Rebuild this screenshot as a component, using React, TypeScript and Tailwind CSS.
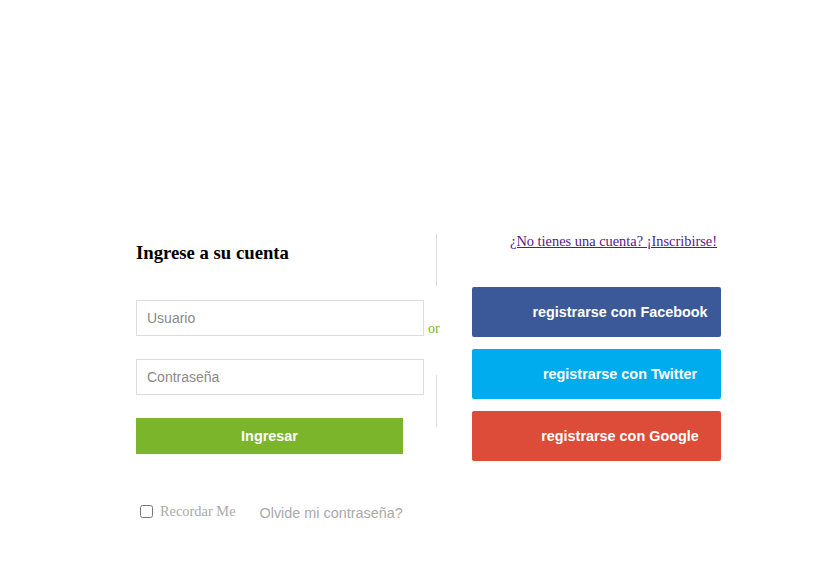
export default function App() {
  return (
    <div className="min-h-[586px] w-full bg-white pt-[234px]">
      <div className="ml-[136px] flex w-[585px]">
        {/* Login form */}
        <div className="w-[288px]">
          <h2 className="mt-[8px] font-['Liberation_Serif',serif] text-[18.72px] font-bold leading-[21px] text-black">
            Ingrese a su cuenta
          </h2>
          <input
            type="text"
            placeholder="Usuario"
            className="mt-[37px] block h-[36px] w-[288px] border border-[#dddddd] px-[10px] font-['Liberation_Sans',sans-serif] text-[14px] text-[#555] placeholder:text-[#8a8a8a] outline-none"
          />
          <input
            type="password"
            placeholder="Contraseña"
            className="mt-[23px] block h-[36px] w-[288px] border border-[#dddddd] px-[10px] font-['Liberation_Sans',sans-serif] text-[14px] text-[#555] placeholder:text-[#8a8a8a] outline-none"
          />
          <button className="mt-[23px] block h-[36px] w-[267px] bg-[#7ab52b] pt-[2px] font-['Liberation_Sans',sans-serif] text-[14.4px] font-bold text-white">
            Ingresar
          </button>
          <div className="mt-[45px] flex items-center">
            <label className="flex items-center font-['Liberation_Serif',serif] text-[14.4px] text-[#aaaaaa]">
              <input type="checkbox" className="ml-[4px] mr-[7px] h-[13px] w-[13px]" />
              Recordar Me
            </label>
            <a className="ml-[24px] mt-[4px] font-['Liberation_Sans',sans-serif] text-[14.4px] text-[#aaaaaa]">
              Olvide mi contraseña?
            </a>
          </div>
        </div>

        {/* Divider */}
        <div className="flex w-[48px] flex-col">
          <div className="ml-[12px] h-[52px] w-px bg-[#dddddd]" />
          <div className="mt-[35px] pl-[4px] font-['Liberation_Serif',serif] text-[14px] leading-[16px] text-[#7ab52b]">
            or
          </div>
          <div className="ml-[12px] mt-[38px] h-[52px] w-px bg-[#dddddd]" />
        </div>

        {/* Social */}
        <div className="w-[249px]">
          <div className="pr-[4px] text-right font-['Liberation_Serif',serif] text-[14.4px] leading-[15px]">
            <a href="#" className="text-[#551a8b] underline">
              ¿No tienes una cuenta? ¡Inscribirse!
            </a>
          </div>
          <div className="mt-[38px] flex flex-col gap-[12px]">
            <button className="h-[50px] w-[249px] rounded-[2px] bg-[#3b5998] pl-[47px] pt-[2px] font-['Liberation_Sans',sans-serif] text-[14.4px] font-bold text-white">
              registrarse con Facebook
            </button>
            <button className="h-[50px] w-[249px] rounded-[2px] bg-[#00acee] pl-[47px] pt-[2px] font-['Liberation_Sans',sans-serif] text-[14.4px] font-bold text-white">
              registrarse con Twitter
            </button>
            <button className="h-[50px] w-[249px] rounded-[2px] bg-[#dd4b39] pl-[47px] pt-[2px] font-['Liberation_Sans',sans-serif] text-[14.4px] font-bold text-white">
              registrarse con Google
            </button>
          </div>
        </div>
      </div>
    </div>
  );
}
